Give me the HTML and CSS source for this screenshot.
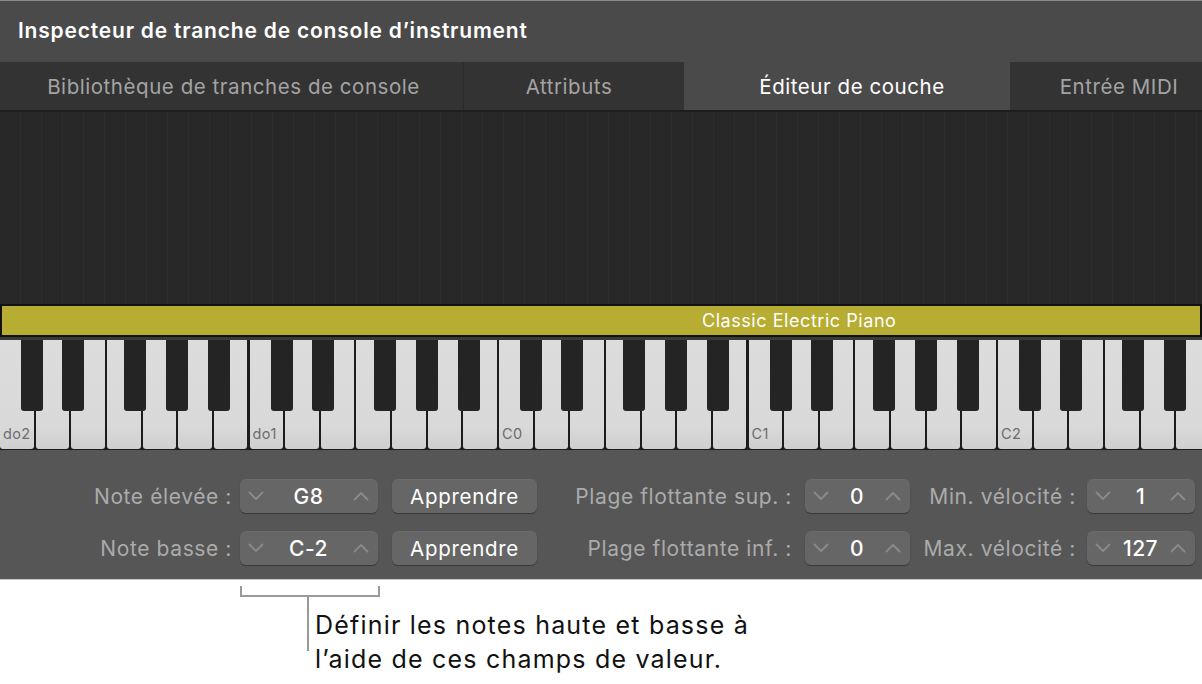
FILE: index.html
```html
<!DOCTYPE html>
<html lang="fr">
<head>
<meta charset="utf-8">
<link rel="stylesheet" href="styles.css">
</head>
<body>
<div class="panel">
  <div class="titlebar">Inspecteur de tranche de console d’instrument</div>
  <div class="tabs">
    <div class="tab t1">Bibliothèque de tranches de console</div>
    <div class="tab t2">Attributs</div>
    <div class="tab t3 active">Éditeur de couche</div>
    <div class="tab t4">Entrée MIDI</div>
  </div>
  <div class="grid"></div>
  <div class="layer"><span>Classic Electric Piano</span></div>
  <div class="keyboard" id="kb"></div>
  <div class="controls">
    <div class="lbl">Note élevée :</div>
    <div class="stepper s-note"><span class="chev"><svg width="16" height="10" viewBox="0 0 16 10"><path d="M1.5 1.5 L8 8 L14.5 1.5"/></svg></span><span class="val">G8</span><span class="chev"><svg width="16" height="10" viewBox="0 0 16 10"><path d="M1.5 8.5 L8 2 L14.5 8.5"/></svg></span></div>
    <div class="btn">Apprendre</div>
    <div class="lbl">Plage flottante sup. :</div>
    <div class="stepper"><span class="chev"><svg width="16" height="10" viewBox="0 0 16 10"><path d="M1.5 1.5 L8 8 L14.5 1.5"/></svg></span><span class="val">0</span><span class="chev"><svg width="16" height="10" viewBox="0 0 16 10"><path d="M1.5 8.5 L8 2 L14.5 8.5"/></svg></span></div>
    <div class="lbl">Min. vélocité :</div>
    <div class="stepper"><span class="chev"><svg width="16" height="10" viewBox="0 0 16 10"><path d="M1.5 1.5 L8 8 L14.5 1.5"/></svg></span><span class="val">1</span><span class="chev"><svg width="16" height="10" viewBox="0 0 16 10"><path d="M1.5 8.5 L8 2 L14.5 8.5"/></svg></span></div>

    <div class="lbl">Note basse :</div>
    <div class="stepper s-note"><span class="chev"><svg width="16" height="10" viewBox="0 0 16 10"><path d="M1.5 1.5 L8 8 L14.5 1.5"/></svg></span><span class="val">C-2</span><span class="chev"><svg width="16" height="10" viewBox="0 0 16 10"><path d="M1.5 8.5 L8 2 L14.5 8.5"/></svg></span></div>
    <div class="btn">Apprendre</div>
    <div class="lbl">Plage flottante inf. :</div>
    <div class="stepper"><span class="chev"><svg width="16" height="10" viewBox="0 0 16 10"><path d="M1.5 1.5 L8 8 L14.5 1.5"/></svg></span><span class="val">0</span><span class="chev"><svg width="16" height="10" viewBox="0 0 16 10"><path d="M1.5 8.5 L8 2 L14.5 8.5"/></svg></span></div>
    <div class="lbl">Max. vélocité :</div>
    <div class="stepper"><span class="chev"><svg width="16" height="10" viewBox="0 0 16 10"><path d="M1.5 1.5 L8 8 L14.5 1.5"/></svg></span><span class="val">127</span><span class="chev"><svg width="16" height="10" viewBox="0 0 16 10"><path d="M1.5 8.5 L8 2 L14.5 8.5"/></svg></span></div>
  </div>
</div>
<div class="callout">
  <div class="bracket"></div>
  <div class="note">
    <div class="stem"></div>
    <p>Définir les notes haute et basse à<br>l’aide de ces champs de valeur.</p>
  </div>
</div>
<script src="script.js"></script>
</body>
</html>
```

FILE: script.js
```js
(function () {
  var kb = document.getElementById('kb');
  var labels = ['do2', 'do1', 'C0', 'C1', 'C2'];
  var blacks = [21, 62, 124, 166, 208];
  for (var o = 0; o < 5; o++) {
    var oct = document.createElement('div');
    oct.className = 'octave';
    for (var w = 0; w < 7; w++) {
      var k = document.createElement('div');
      k.className = 'white';
      if (w === 0) {
        var s = document.createElement('span');
        s.className = 'klabel';
        s.textContent = labels[o];
        k.appendChild(s);
      }
      oct.appendChild(k);
    }
    for (var b = 0; b < blacks.length; b++) {
      var bk = document.createElement('div');
      bk.className = 'black';
      bk.style.left = blacks[b] + 'px';
      oct.appendChild(bk);
    }
    kb.appendChild(oct);
  }
})();
```

FILE: styles.css
```css
html, body {
  margin: 0;
  padding: 0;
  background: #ffffff;
}
body {
  width: 1202px;
  height: 684px;
  overflow: hidden;
  font-family: "Inter", "Liberation Sans", sans-serif;
}
.panel {
  background: #565656;
}
.titlebar {
  height: 62px;
  box-sizing: border-box;
  background: #4a4a4a;
  border-top: 1px solid #8c8c8c;
  color: #ffffff;
  font-weight: 600;
  font-size: 21px;
  letter-spacing: 0.8px;
  padding-left: 18px;
  line-height: 60px;
}
.tabs {
  display: flex;
  height: 48px;
  background: #333333;
}
.tab {
  box-sizing: border-box;
  text-align: center;
  font-size: 20.5px;
  letter-spacing: 0.55px;
  line-height: 50px;
  color: #a3a3a3;
  background: #333333;
}
.t1 { width: 464px; border-right: 1px solid #2b2b2b; padding-left: 4px; }
.t2 { width: 220px; padding-right: 10px; }
.t3 { width: 326px; padding-left: 10px; }
.t4 { width: 192px; padding-left: 26px; }
.tab.active {
  background: #4a4a4a;
  color: #ffffff;
}
.grid {
  height: 194px;
  box-sizing: border-box;
  border-top: 2px solid #1e1e1e;
  background-color: #282828;
  background-image: repeating-linear-gradient(to right, transparent 0, transparent 20px, #2e2e2e 20px, #2e2e2e 21px);
}
.layer {
  height: 33px;
  box-sizing: border-box;
  border: 2px solid #111111;
  background: #b6ad32;
  color: #ffffff;
  font-size: 18px;
  letter-spacing: 0.55px;
  line-height: 29px;
  padding-left: 700px;
}
.keyboard {
  height: 113px;
  box-sizing: border-box;
  background: #1c1c1c;
  border-top: 3px solid #3a3a3a;
  display: flex;
  overflow: hidden;
}
.octave {
  flex: 0 0 249.5px;
  position: relative;
  display: flex;
  height: 110px;
}
.white {
  flex: 1;
  position: relative;
  margin-right: 2px;
  height: 109px;
  border-radius: 0 0 3px 3px;
  background: linear-gradient(to bottom, #dcdcdc 0, #d9d9d9 80%, #cfcfcf 100%);
}
.black {
  position: absolute;
  top: 0;
  width: 22px;
  height: 71px;
  background: #242424;
  border-radius: 0 0 3px 3px;
}
.klabel {
  position: absolute;
  left: 3px;
  bottom: 7px;
  font-size: 14.5px;
  letter-spacing: 0.4px;
  color: #6c6c6c;
}
.controls {
  height: 130px;
  box-sizing: border-box;
  padding-top: 29px;
  border-bottom: 1px solid #c8c8c8;
  display: grid;
  grid-template-columns: 240px 152px 145px 268px 105px 177px 108px;
  grid-template-rows: 34px 34px;
  row-gap: 18px;
  align-items: center;
}
.lbl {
  text-align: right;
  color: #ababab;
  font-size: 21px;
  letter-spacing: 0.6px;
  white-space: nowrap;
}
.lbl:nth-child(1), .lbl:nth-child(8) { padding-right: 8px; }
.lbl:nth-child(4), .lbl:nth-child(11) { padding-right: 13px; }
.lbl:nth-child(6), .lbl:nth-child(13) { padding-right: 11px; }
.stepper, .btn {
  height: 34px;
  box-sizing: border-box;
  background: #666666;
  border-radius: 6px;
  box-shadow: 0 1px 1px rgba(0,0,0,0.35), inset 0 1px 0 rgba(255,255,255,0.04);
  color: #ffffff;
}
.stepper {
  display: flex;
  align-items: center;
  justify-content: space-between;
  padding: 0 9px 0 8px;
  font-size: 21px;
  letter-spacing: 0.5px;
}
.s-note { width: 138px; }
.stepper .val {
  flex: 1;
  text-align: center;
  font-weight: 500;
}
.chev {
  display: flex;
  width: 16px;
}
.chev path {
  fill: none;
  stroke: #8a8a8a;
  stroke-width: 1.8;
  stroke-linecap: round;
  stroke-linejoin: round;
}
.btn {
  display: flex;
  align-items: center;
  justify-content: center;
  font-size: 20.5px;
  letter-spacing: 0.7px;
}
.callout {
  position: relative;
  height: 103px;
}
.bracket {
  position: absolute;
  left: 240px;
  top: 6px;
  width: 136px;
  height: 9px;
  border: 2px solid #9a9a9a;
  border-top: none;
}
.note {
  position: absolute;
  left: 307px;
  top: 16px;
  display: flex;
}
.stem {
  width: 2px;
  height: 55px;
  background: #9a9a9a;
}
.note p {
  margin: 12px 0 0 6px;
  font-size: 25px;
  letter-spacing: 1.2px;
  line-height: 34px;
  color: #111111;
}
```
